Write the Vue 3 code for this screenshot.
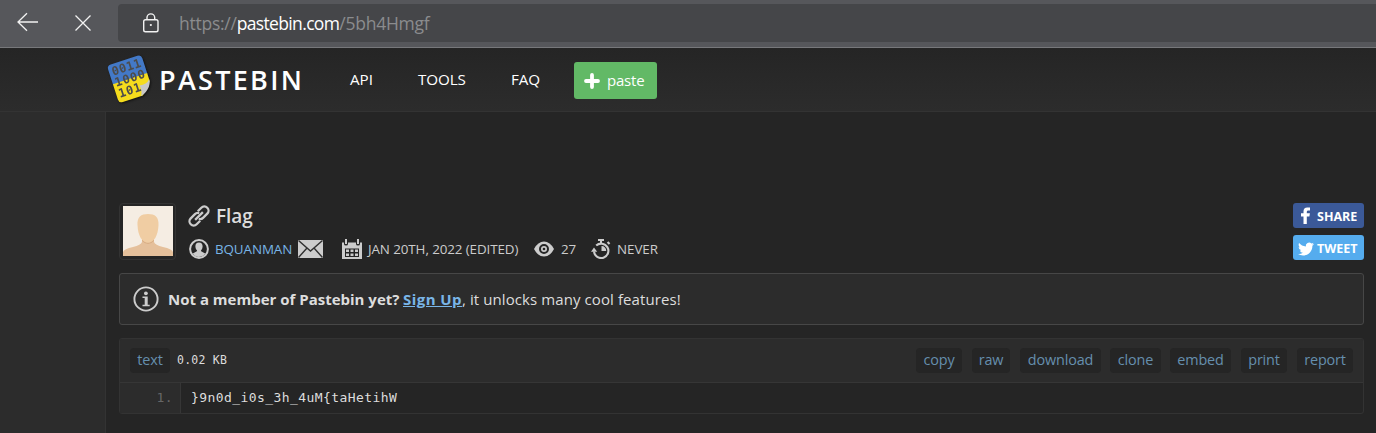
<script setup>
const nav = [
  { label: 'API', cls: 'api' },
  { label: 'TOOLS', cls: 'tools' },
  { label: 'FAQ', cls: 'faq' },
]
const actions = ['copy', 'raw', 'download', 'clone', 'embed', 'print', 'report']
</script>

<template>
  <div class="window">
    <div class="browser">
      <svg class="back" viewBox="0 0 24 20"><path d="M11 1.200 2 10l9 8.800M2 10h20" /></svg>
      <svg class="stop" viewBox="0 0 18 18"><path d="M1.500 1.500l15 15M16.500 1.500l-15 15" /></svg>
      <div class="address">
        <svg class="lock" viewBox="0 0 18 20">
          <rect x="1.700" y="6.700" width="14.300" height="12" rx="1.800" />
          <path d="M5 6.500V4.500a3.850 3.600 0 0 1 7.700 0v2" />
          <circle cx="8.850" cy="12" r="1.100" />
        </svg>
        <span class="url">https://<b>pastebin.com</b>/5bh4Hmgf</span>
      </div>
    </div>

    <header class="header">
      <svg class="logo" viewBox="0 0 50 54">
        <g transform="rotate(-18 24.500 26.500)">
          <path class="logo-blue" d="M10 7H38q4 0 4 4V27H6V11q0-4 4-4Z" />
          <path class="logo-yellow" d="M6 26.500H42V35L31 46.500H10q-4 0-4-4Z" />
          <path class="logo-fold" d="M42 33Q42 38 37.500 42T29 46.500q3-4 2-10.500Q38 37.500 42 33Z" />
          <g class="digits">
            <text x="9" y="18.500" textLength="30">0011</text>
            <text x="8.500" y="30" textLength="31">1000</text>
            <text x="8.500" y="41.500" textLength="23">101</text>
          </g>
        </g>
      </svg>
      <span class="brand">PASTEBIN</span>
      <nav class="nav">
        <a v-for="n in nav" :key="n.label" :class="n.cls">{{ n.label }}</a>
      </nav>
      <button class="paste">
        <svg viewBox="0 0 16 16"><path d="M8 2v12M2 8h12" /></svg>
        <span>paste</span>
      </button>
    </header>

    <div class="page">
      <main class="content">
        <section class="info">
          <div class="avatar">
            <svg viewBox="0 0 50 50">
              <rect width="50" height="50" fill="#f5ede3" />
              <path fill="#e5c09b" d="M19 31h12v5q1 3 9 5 9 2 10 5v4H0v-4q1-3 10-5 8-2 9-5Z" />
              <path fill="#d9ae85" d="M19 33q6 8 12 0v2q-6 6-12 0Z" />
              <path fill="#f0cda3" d="M14.500 19C14 11 18 8 25 8s11 3 10.500 11C35 30 31 36.500 25 36.500S15 30 14.500 19Z" />
            </svg>
          </div>
          <div class="details">
            <div class="title">
              <svg class="link" viewBox="0 0 20 20">
                <g transform="rotate(-45 10 10)">
                  <path d="M7.500 14.200H2.500a4.200 4.200 0 0 1 0-8.400H8.500a4 4 0 0 1 3.600 2.400" />
                  <path d="M12.500 5.800h5a4.200 4.200 0 0 1 0 8.400H11.500a4 4 0 0 1-3.600-2.400" />
                  <path d="M4.500 10h11" />
                </g>
              </svg>
              <h1>Flag</h1>
            </div>
            <div class="meta">
              <svg class="user" viewBox="0 0 20 20">
                <circle cx="10" cy="10" r="8.900" fill="none" stroke="#ccc" stroke-width="2" />
                <path fill="#ccc" d="M10 3.500c-2.500 0-3.700 1.500-3.600 4 .1 2 .8 3 1.700 4-.2 1.500-2.600 1.700-4.300 2.900Q6 18 10 18t6.200-3.600c-1.700-1.200-4.100-1.400-4.300-2.900.9-1 1.600-2 1.700-4 .1-2.500-1.100-4-3.600-4Z" />
              </svg>
              <a class="author">BQUANMAN</a>
              <svg class="mail" viewBox="0 0 25 18">
                <rect width="25" height="18" fill="#ccc" />
                <path d="M.5.500 12.500 11 24.500.5M.5 17.500 9 8M24.500 17.500 16 8" />
              </svg>
              <svg class="calendar" viewBox="0 0 20 20">
                <path fill="#ccc" d="M0 3.500h2V5q0 1.500 2 1.500T6 5V3.500h8V5q0 1.500 2 1.500T18 5V3.500h2V20H0Z" />
                <path fill="#ccc" d="M3 0h2v5H3ZM15 0h2v5h-2Z" />
                <path fill="#252525" d="M3 9.500h14V18H3Z" />
                <path fill="#ccc" d="M4 10.500h3v2.500H4ZM8.500 10.500h3v2.500h-3ZM13 10.500h3v2.500h-3ZM4 14.500h3V17H4ZM8.500 14.500h3V17h-3ZM13 14.500h3V17h-3Z" />
              </svg>
              <span class="date">JAN 20TH, 2022 (EDITED)</span>
              <svg class="eye" viewBox="0 0 20 16">
                <path fill="#ccc" d="M0 8Q4 .5 10 .5T20 8Q16 15.500 10 15.500T0 8Z" />
                <circle cx="10" cy="8" r="4" fill="#ccc" stroke="#252525" stroke-width="2" />
                <circle cx="10" cy="8" r="1.300" fill="#252525" />
              </svg>
              <span class="views">27</span>
              <svg class="timer" viewBox="0 0 20 20">
                <path fill="none" stroke="#ccc" stroke-width="2.100" d="M3 12.500A7.200 7.200 0 1 0 5.200 6.600" />
                <path fill="#ccc" d="M7 0h6v2h-2v3H9V2H7ZM15.800 3.800 17.300 2.300l2 2L17.800 5.800ZM10.500 7a4.700 4.700 0 0 1 4.700 4.900h-4.700ZM0 12.800 3 8.500l3.200 4.300Z" />
              </svg>
              <span class="expire">NEVER</span>
            </div>
          </div>
          <div class="social">
            <a class="share">
              <svg viewBox="0 0 18 20"><path d="M7.500 18v-7.500H5V7.300h2.500V5.300q0-3.800 3.800-3.800H14v3h-1.700q-1.500 0-1.500 1.300v1.500h3.100l-.5 3.200h-2.600V18Z" /></svg>
              <span>SHARE</span>
            </a>
            <a class="tweet">
              <svg viewBox="0 0 24 24"><path d="M23.950 4.570a10 10 0 0 1-2.820.77 4.960 4.960 0 0 0 2.160-2.720c-.95.55-2 .95-3.130 1.180a4.920 4.920 0 0 0-8.380 4.480C7.690 8.090 4.070 6.130 1.640 3.160a4.820 4.820 0 0 0-.67 2.480c0 1.710.87 3.210 2.190 4.100a4.900 4.900 0 0 1-2.230-.62v.06a4.920 4.920 0 0 0 3.950 4.830 5 5 0 0 1-2.210.08 4.940 4.940 0 0 0 4.600 3.420A9.870 9.870 0 0 1 0 19.540a13.990 13.990 0 0 0 7.560 2.210c9.050 0 14-7.500 14-13.980l-.02-.64a9.940 9.940 0 0 0 2.410-2.560Z" /></svg>
              <span>TWEET</span>
            </a>
          </div>
        </section>

        <section class="notice">
          <svg viewBox="0 0 26 26">
            <circle cx="13" cy="13" r="11.600" fill="none" stroke="#ccc" stroke-width="1.900" />
            <circle cx="12.900" cy="7.300" r="1.900" fill="#ccc" />
            <path fill="#ccc" d="M9.500 10.500h5.200v8.300h2v1.500H9.500v-1.500h2.200V12H9.500Z" />
          </svg>
          <p><b>Not a member of Pastebin yet?</b><a>Sign Up</a><span>, it unlocks many cool features!</span></p>
        </section>

        <section class="code">
          <div class="toolbar">
            <a class="chip text">text</a>
            <span class="size">0.02 KB</span>
            <div class="actions">
              <a v-for="a in actions" :key="a" class="chip" :class="a">{{ a }}</a>
            </div>
          </div>
          <div class="source">
            <span class="line">1.</span>
            <code>}9n0d_i0s_3h_4uM{taHetihW</code>
          </div>
        </section>
      </main>
    </div>
  </div>
</template>

<style>
body { background: #252525; }
</style>

<style scoped>
* { box-sizing: border-box; }
svg { display: block; flex: none; }
.window {
  height: 433px;
  overflow: hidden;
  background: #252525;
  color: #ddd;
  font-family: "Open Sans", "Noto Sans", sans-serif;
  white-space: nowrap;
  display: flex;
  flex-direction: column;
}
.browser {
  height: 48px;
  flex: none;
  background: #56575b;
  border-bottom: 1px solid #77787b;
  display: flex;
  align-items: flex-start;
}
.back { width: 24px; height: 20px; margin: 12px 0 0 16px; }
.stop { width: 18px; height: 18px; margin: 14px 0 0 34px; }
.back path, .stop path { fill: none; stroke: #f2f2f2; stroke-width: 1.3; }
.address {
  flex: 1;
  height: 38px;
  margin: 4px 0 0 26px;
  border-radius: 4px 0 0 4px;
  background: #454649;
  display: flex;
  align-items: center;
}
.lock { width: 18px; height: 20px; margin: 0 0 1px 24px; fill: none; stroke: #f2f2f2; stroke-width: 1.4; }
.lock circle { fill: #f2f2f2; stroke: none; }
.url { margin: 0 0 1px 19px; font-size: 17.5px; letter-spacing: -.25px; color: #8b8c8e; line-height: 38px; }
.url b { font-weight: 400; letter-spacing: -.65px; color: #fff; }

.header {
  height: 64px;
  flex: none;
  background: linear-gradient(#252525, #2c2c2c);
  border-bottom: 1px solid #333;
  display: flex;
  align-items: flex-start;
  color: #fff;
}
.logo { width: 50px; height: 54px; margin: 4px 0 0 106px; filter: drop-shadow(1px 1px 1px #111); }
.logo-blue { fill: #4379c7; }
.logo-yellow { fill: #f5dc1d; }
.logo-fold { fill: #c8c8c8; }
.digits { font: bold 12px "DejaVu Sans Mono", monospace; fill: #4c4c4c; }
.brand { margin-left: 3px; width: 191px; font-size: 27px; font-weight: 600; line-height: 64px; letter-spacing: 2.3px; }
.nav { display: flex; font-size: 15.2px; line-height: 63px; }
.nav a { letter-spacing: -.05px; }
.api { width: 68px; }
.tools { width: 93px; }
.nav .tools { letter-spacing: -.1px; }
.faq { width: 63px; }
.paste {
  width: 83px;
  height: 37px;
  margin-top: 14px;
  padding: 0 0 0 10px;
  border: 0;
  border-radius: 3px;
  background: #62b966;
  color: #fff;
  font: 15px "Open Sans", sans-serif;
  letter-spacing: -.2px;
  display: flex;
  align-items: center;
  gap: 7px;
}
.paste svg { width: 16px; height: 16px; fill: none; stroke: #fff; stroke-width: 3.8; stroke-linecap: round; }
.paste span { padding-bottom: 1px; }

.page { flex: 1; min-height: 0; background: #2c2c2c; padding-left: 105px; display: flex; }
.content { flex: 1; background: #252525; border-left: 1px solid #333; padding: 91px 12px 0 13px; }
.info { height: 58px; display: flex; }
.avatar { width: 57px; height: 57px; border: 1px solid #333; border-radius: 4px; padding: 2px 3px; flex: none; }
.avatar svg { width: 50px; height: 50px; }
.details { flex: 1; padding-left: 13px; }
.title { height: 26px; display: flex; align-items: center; }
.link { width: 20px; height: 20px; overflow: visible; fill: none; stroke: #ccc; stroke-width: 2.3; }
h1 { margin: 0 0 1px 7px; font-size: 19px; font-weight: 600; line-height: 24px; letter-spacing: -.1px; color: #ddd; }
.meta { height: 20px; margin-top: 10px; display: flex; align-items: center; font-size: 13.4px; line-height: 20px; color: #ccc; }
.user, .calendar, .timer { width: 20px; height: 20px; }
.author { width: 89px; padding-left: 6px; color: #79b5e7; letter-spacing: -.1px; }
.mail { width: 25px; height: 18px; margin-right: 19px; }
.mail path { fill: none; stroke: #303030; stroke-width: 1.4; }
.date { width: 172px; padding-left: 6px; letter-spacing: -.1px; }
.eye { width: 20px; height: 16px; }
.views { width: 37px; padding-left: 7px; letter-spacing: -.2px; }
.expire { padding-left: 6px; letter-spacing: -.05px; }
.social { width: 71px; display: flex; flex-direction: column; gap: 7px; }
.social a { height: 25px; border-radius: 3px; display: flex; align-items: center; color: #fff; font-size: 12.5px; font-weight: 700; letter-spacing: 0; }
.social span { padding-top: 1px; }
.social svg { fill: #fff; }
.share { background: #3b5998; }
.share svg { width: 18px; height: 20px; margin: 0 3px; }
.tweet { background: #55acee; }
.tweet svg { width: 16px; height: 16px; margin: 3px 3px 0 5px; }

.notice {
  height: 52px;
  margin-top: 12px;
  border: 1px solid #474747;
  border-radius: 3px;
  background: #2c2c2c;
  padding-left: 13px;
  display: flex;
  align-items: center;
}
.notice svg { width: 26px; height: 26px; }
.notice p { margin: 0 0 0 9px; display: flex; font-size: 15px; line-height: 22px; }
.notice b { width: 235px; font-weight: 700; letter-spacing: 0; }
.notice a { width: 59px; color: #79b5e7; font-weight: 700; text-decoration: underline; letter-spacing: .45px; }
.notice span { letter-spacing: .09px; }

.code { height: 76px; margin-top: 13px; border: 1px solid #333; border-radius: 3px; overflow: hidden; }
.toolbar { height: 44px; background: #2c2c2c; border-bottom: 1px solid #363636; display: flex; align-items: center; padding: 0 10px; }
.chip { height: 25px; border-radius: 4px; background: #252525; color: #658fae; font-size: 14.4px; line-height: 23px; text-align: center; letter-spacing: -.15px; }
.text { width: 40px; }
.size { margin: 0 0 1px 7px; font: 11.5px "DejaVu Sans Mono", monospace; letter-spacing: .23px; color: #ddd; }
.actions { margin-left: auto; display: flex; gap: 10px; }
.copy { width: 46px; }
.raw { width: 38px; }
.download { width: 81px; }
.clone { width: 51px; margin: 0 -1px; }
.embed { width: 61px; }
.print { width: 46px; }
.report { width: 56px; }
.source { height: 30px; display: flex; font: 13px/30px "DejaVu Sans Mono", monospace; letter-spacing: .42px; }
.line { width: 61px; padding-right: 7px; text-align: right; background: #2c2c2c; border-right: 1px solid #363636; color: #666; }
code { margin-left: 10px; font: inherit; color: #ddd; }
</style>
